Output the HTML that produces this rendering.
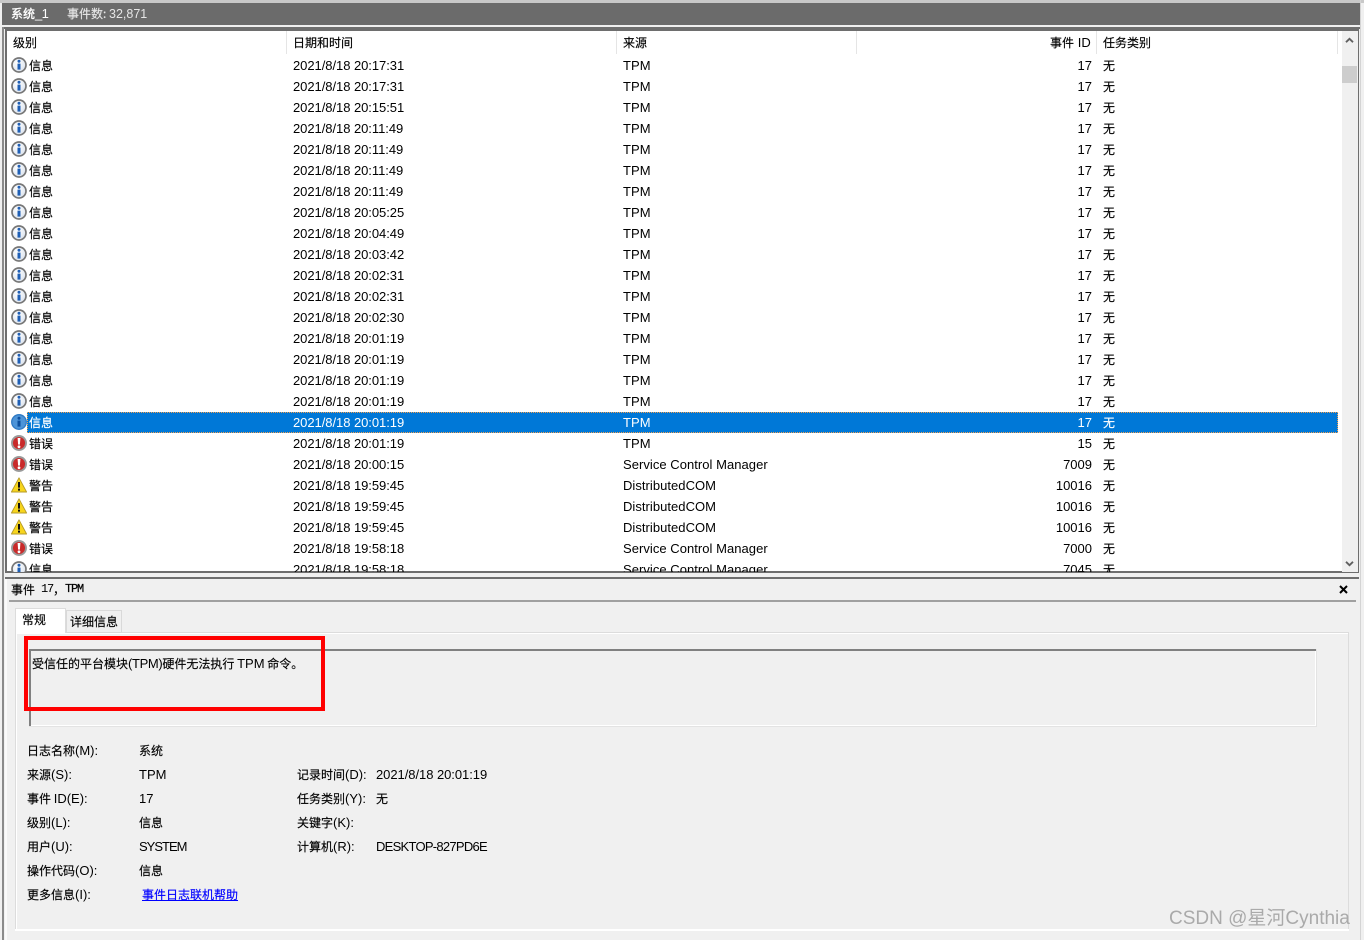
<!DOCTYPE html>
<html lang="zh"><head><meta charset="utf-8"><title>事件查看器</title>
<style>
html,body{margin:0;padding:0}
body{width:1364px;height:940px;position:relative;overflow:hidden;background:#f0f0f0;font:12px/21px "Noto Sans CJK SC","Liberation Sans",sans-serif;color:#000;-webkit-text-stroke:.15px currentColor}
div{position:absolute;box-sizing:border-box}
b{font:13px/21px "Liberation Sans","Noto Sans CJK SC",sans-serif;white-space:pre;-webkit-text-stroke:0;font-weight:400}
i{font-style:normal;white-space:pre}
.r{left:0;width:1335px;height:21px;position:relative;white-space:nowrap}
.r>*{position:absolute;top:0;line-height:21px}
.r svg{left:4px;top:2px;width:16px;height:16px}
.a{left:22px}.d{left:286px;letter-spacing:-.05px}.s{left:616px;letter-spacing:.04px}.n{right:250px;width:60px;text-align:right}.t{left:1096px}
.sel{background:#0078d7;color:#fff}
.h{top:31px;height:23px;line-height:23px;white-space:nowrap}
.v{top:31px;width:1px;height:23px;background:#e5e5e5}
.f{white-space:nowrap;height:24px;line-height:24px}
.f b{line-height:24px}
</style></head><body>
<svg width="0" height="0" style="position:absolute">
<defs>
<radialGradient id="gb" cx=".4" cy=".35" r=".8"><stop offset="0" stop-color="#fff"/><stop offset="1" stop-color="#d5deea"/></radialGradient>
<symbol id="ii" viewBox="0 0 16 16"><circle cx="8" cy="8" r="7" fill="url(#gb)" stroke="#767676" stroke-width="1.7"/><circle cx="8" cy="4.3" r="1.5" fill="#1f5fb5"/><path d="M6.5 6.6h3v6h-3z" fill="#1f5fb5"/></symbol>
<symbol id="is" viewBox="0 0 16 16"><circle cx="8" cy="8" r="7.3" fill="#4d94d8" stroke="#2f7ac4" stroke-width="1.3"/><circle cx="8" cy="4.3" r="1.5" fill="#0c4f9e"/><path d="M6.5 6.6h3v6h-3z" fill="#0c4f9e"/></symbol>
<symbol id="ie" viewBox="0 0 16 16"><circle cx="8" cy="8" r="7" fill="#c92a2a" stroke="#9a9a9a" stroke-width="1.9"/><path d="M6.6 3h2.8l-.5 6.6H7.1z" fill="#fff"/><circle cx="8" cy="11.8" r="1.4" fill="#fff"/></symbol>
<symbol id="iw" viewBox="0 0 16 16"><path d="M8 .8 15.6 15H.4z" fill="#f7d51d" stroke="#b59a2a" stroke-width=".9" stroke-linejoin="round"/><path d="M7 5h2v5.6H7zM7 11.6h2v2H7z" fill="#111"/></symbol>
</defs></svg>

<!-- outer frame -->
<div style="left:0;top:0;width:1364px;height:3px;background:#c8c8c8"></div>
<div style="left:2px;top:3px;width:1358px;height:22px;background:#6b6b6b"></div>
<div style="left:2px;top:27px;width:1358px;height:2px;background:#6f6f6f"></div>
<div style="left:2px;top:27px;width:2px;height:913px;background:#8a8a8a"></div>
<div style="left:1360px;top:0;width:1px;height:940px;background:#d4d4d4"></div>
<div style="left:11px;top:3px;height:22px;line-height:22px;color:#fff;white-space:nowrap"><i style="font-weight:500">系统</i><b style="line-height:22px;color:#fff;letter-spacing:-.6px">_1</b></div>
<div style="left:67px;top:3px;height:22px;line-height:22px;color:#e6e6e6;white-space:nowrap">事件数: <b style="line-height:22px;color:#e6e6e6;font-size:12.5px">32,871</b></div>

<!-- list -->
<div style="left:5px;top:29px;width:1354px;height:544px;background:#fff;border:2px solid #6e6e6e;border-width:2px 1px 2px 2px"></div>
<div class="h" style="left:13px">级别</div>
<div class="h" style="left:293px">日期和时间</div>
<div class="h" style="left:623px">来源</div>
<div class="h" style="left:1050px">事件 <b style="line-height:23px;margin-left:1px">ID</b></div>
<div class="h" style="left:1103px">任务类别</div>
<div class="v" style="left:286px"></div><div class="v" style="left:616px"></div><div class="v" style="left:856px"></div><div class="v" style="left:1096px"></div><div class="v" style="left:1337px"></div>

<div style="left:7px;top:55px;width:1335px;height:517px;overflow:hidden">
<div style="left:0;top:0;width:1335px">
<div class="r"><svg><use href="#ii"/></svg><i class="a">信息</i><b class="d">2021/8/18 20:17:31</b><b class="s">TPM</b><b class="n">17</b><i class="t">无</i></div>
<div class="r"><svg><use href="#ii"/></svg><i class="a">信息</i><b class="d">2021/8/18 20:17:31</b><b class="s">TPM</b><b class="n">17</b><i class="t">无</i></div>
<div class="r"><svg><use href="#ii"/></svg><i class="a">信息</i><b class="d">2021/8/18 20:15:51</b><b class="s">TPM</b><b class="n">17</b><i class="t">无</i></div>
<div class="r"><svg><use href="#ii"/></svg><i class="a">信息</i><b class="d">2021/8/18 20:11:49</b><b class="s">TPM</b><b class="n">17</b><i class="t">无</i></div>
<div class="r"><svg><use href="#ii"/></svg><i class="a">信息</i><b class="d">2021/8/18 20:11:49</b><b class="s">TPM</b><b class="n">17</b><i class="t">无</i></div>
<div class="r"><svg><use href="#ii"/></svg><i class="a">信息</i><b class="d">2021/8/18 20:11:49</b><b class="s">TPM</b><b class="n">17</b><i class="t">无</i></div>
<div class="r"><svg><use href="#ii"/></svg><i class="a">信息</i><b class="d">2021/8/18 20:11:49</b><b class="s">TPM</b><b class="n">17</b><i class="t">无</i></div>
<div class="r"><svg><use href="#ii"/></svg><i class="a">信息</i><b class="d">2021/8/18 20:05:25</b><b class="s">TPM</b><b class="n">17</b><i class="t">无</i></div>
<div class="r"><svg><use href="#ii"/></svg><i class="a">信息</i><b class="d">2021/8/18 20:04:49</b><b class="s">TPM</b><b class="n">17</b><i class="t">无</i></div>
<div class="r"><svg><use href="#ii"/></svg><i class="a">信息</i><b class="d">2021/8/18 20:03:42</b><b class="s">TPM</b><b class="n">17</b><i class="t">无</i></div>
<div class="r"><svg><use href="#ii"/></svg><i class="a">信息</i><b class="d">2021/8/18 20:02:31</b><b class="s">TPM</b><b class="n">17</b><i class="t">无</i></div>
<div class="r"><svg><use href="#ii"/></svg><i class="a">信息</i><b class="d">2021/8/18 20:02:31</b><b class="s">TPM</b><b class="n">17</b><i class="t">无</i></div>
<div class="r"><svg><use href="#ii"/></svg><i class="a">信息</i><b class="d">2021/8/18 20:02:30</b><b class="s">TPM</b><b class="n">17</b><i class="t">无</i></div>
<div class="r"><svg><use href="#ii"/></svg><i class="a">信息</i><b class="d">2021/8/18 20:01:19</b><b class="s">TPM</b><b class="n">17</b><i class="t">无</i></div>
<div class="r"><svg><use href="#ii"/></svg><i class="a">信息</i><b class="d">2021/8/18 20:01:19</b><b class="s">TPM</b><b class="n">17</b><i class="t">无</i></div>
<div class="r"><svg><use href="#ii"/></svg><i class="a">信息</i><b class="d">2021/8/18 20:01:19</b><b class="s">TPM</b><b class="n">17</b><i class="t">无</i></div>
<div class="r"><svg><use href="#ii"/></svg><i class="a">信息</i><b class="d">2021/8/18 20:01:19</b><b class="s">TPM</b><b class="n">17</b><i class="t">无</i></div>
<div class="r"><span class="sel" style="left:20px;top:0;width:1311px;height:21px;outline:1px dotted #f0a050;outline-offset:-1px"></span><svg><use href="#is"/></svg><i class="a" style="color:#fff">信息</i><b class="d" style="color:#fff">2021/8/18 20:01:19</b><b class="s" style="color:#fff">TPM</b><b class="n" style="color:#fff">17</b><i class="t" style="color:#fff">无</i></div>
<div class="r"><svg><use href="#ie"/></svg><i class="a">错误</i><b class="d">2021/8/18 20:01:19</b><b class="s">TPM</b><b class="n">15</b><i class="t">无</i></div>
<div class="r"><svg><use href="#ie"/></svg><i class="a">错误</i><b class="d">2021/8/18 20:00:15</b><b class="s">Service Control Manager</b><b class="n">7009</b><i class="t">无</i></div>
<div class="r"><svg><use href="#iw"/></svg><i class="a">警告</i><b class="d">2021/8/18 19:59:45</b><b class="s">DistributedCOM</b><b class="n">10016</b><i class="t">无</i></div>
<div class="r"><svg><use href="#iw"/></svg><i class="a">警告</i><b class="d">2021/8/18 19:59:45</b><b class="s">DistributedCOM</b><b class="n">10016</b><i class="t">无</i></div>
<div class="r"><svg><use href="#iw"/></svg><i class="a">警告</i><b class="d">2021/8/18 19:59:45</b><b class="s">DistributedCOM</b><b class="n">10016</b><i class="t">无</i></div>
<div class="r"><svg><use href="#ie"/></svg><i class="a">错误</i><b class="d">2021/8/18 19:58:18</b><b class="s">Service Control Manager</b><b class="n">7000</b><i class="t">无</i></div>
<div class="r"><svg><use href="#ii"/></svg><i class="a">信息</i><b class="d">2021/8/18 19:58:18</b><b class="s">Service Control Manager</b><b class="n">7045</b><i class="t">无</i></div>
</div></div>

<!-- scrollbar -->
<div style="left:1342px;top:31px;width:16px;height:541px;background:#f0f0f0"></div>
<div style="left:1342px;top:66px;width:15px;height:17px;background:#cdcdcd"></div>
<svg style="position:absolute;left:1345px;top:37px" width="9" height="7" viewBox="0 0 9 7"><path d="M1 5.2 4.5 1.8 8 5.2" fill="none" stroke="#606060" stroke-width="1.8"/></svg>
<svg style="position:absolute;left:1345px;top:560px" width="9" height="7" viewBox="0 0 9 7"><path d="M1 1.8 4.5 5.2 8 1.8" fill="none" stroke="#606060" stroke-width="1.8"/></svg>

<!-- lower panel -->
<div style="left:5px;top:577px;width:1354px;height:2px;background:#6e6e6e"></div>
<div style="left:5px;top:579px;width:2px;height:361px;background:#fafafa"></div>
<div style="left:11px;top:579px;height:21px;line-height:21px;white-space:nowrap">事件</div>
<div style="left:41px;top:579px;height:21px;line-height:21px;white-space:nowrap;-webkit-text-stroke:0;font:12px/21px 'Liberation Mono',monospace;letter-spacing:-1.2px">17</div>
<div style="left:53px;top:579px;height:21px;line-height:21px">，</div>
<div style="left:65px;top:579px;height:21px;line-height:21px;white-space:nowrap;-webkit-text-stroke:.2px #000;font:12px/21px 'Liberation Mono',monospace;letter-spacing:-1.2px">TPM</div>
<svg style="position:absolute;left:1339px;top:585px" width="9" height="9" viewBox="0 0 9 9"><path d="M1 1 8 8M8 1 1 8" stroke="#000" stroke-width="2"/></svg>
<div style="left:9px;top:600px;width:1347px;height:2px;background:#a0a0a0"></div>

<!-- tab pane -->
<div style="left:15px;top:632px;width:1334px;height:299px;border:1px solid #dcdcdc;border-width:1px 1px 0 1px;box-shadow:inset 1px 1px 0 #fff"></div>
<div style="left:15px;top:929px;width:1334px;height:2px;background:#fff"></div>
<div style="left:66px;top:610px;width:56px;height:23px;background:#f0f0f0;border:1px solid #d9d9d9;line-height:21px;padding-left:3px">详细信息</div>
<div style="left:15px;top:608px;width:51px;height:25px;background:#fff;border:1px solid #dcdcdc;border-bottom:0;line-height:22px;padding-left:6px">常规</div>

<!-- description box -->
<div style="left:29px;top:649px;width:1288px;height:78px;border:2px solid;border-color:#808080 #fff #fff #808080;outline:1px solid #e3e3e3;outline-offset:-1px;background:#f0f0f0"></div>
<div style="left:29px;top:649px;width:1287px;height:2px;background:#808080"></div>
<div style="left:29px;top:649px;width:2px;height:77px;background:#808080"></div>
<div style="left:32px;top:653px;white-space:nowrap">受信任的平台模块<b style="letter-spacing:-.35px">(TPM)</b>硬件无法执行 <b>TPM</b> 命令。</div>
<div style="left:24px;top:636px;width:301px;height:75px;border:4px solid #f00"></div>

<!-- fields -->
<div class="f" style="left:27px;top:739px">日志名称<b>(M):</b></div><div class="f" style="left:139px;top:739px">系统</div>
<div class="f" style="left:27px;top:763px">来源<b>(S):</b></div><div class="f" style="left:139px;top:763px"><b>TPM</b></div>
<div class="f" style="left:27px;top:787px">事件 <b>ID(E):</b></div><div class="f" style="left:139px;top:787px"><b>17</b></div>
<div class="f" style="left:27px;top:811px">级别<b>(L):</b></div><div class="f" style="left:139px;top:811px">信息</div>
<div class="f" style="left:27px;top:835px">用户<b>(U):</b></div><div class="f" style="left:139px;top:835px"><b style="letter-spacing:-1px">SYSTEM</b></div>
<div class="f" style="left:27px;top:859px">操作代码<b>(O):</b></div><div class="f" style="left:139px;top:859px">信息</div>
<div class="f" style="left:27px;top:883px">更多信息<b>(I):</b></div><div class="f" style="left:142px;top:883px;color:#00f;text-decoration:underline">事件日志联机帮助</div>
<div class="f" style="left:297px;top:763px">记录时间<b>(D):</b></div><div class="f" style="left:376px;top:763px"><b style="letter-spacing:-.05px">2021/8/18 20:01:19</b></div>
<div class="f" style="left:297px;top:787px">任务类别<b>(Y):</b></div><div class="f" style="left:376px;top:787px">无</div>
<div class="f" style="left:297px;top:811px">关键字<b>(K):</b></div>
<div class="f" style="left:297px;top:835px">计算机<b>(R):</b></div><div class="f" style="left:376px;top:835px"><b style="letter-spacing:-.73px">DESKTOP-827PD6E</b></div>

<!-- watermark -->
<div style="left:1169px;top:905px;height:28px;line-height:28px;white-space:nowrap;color:#aaa;font-size:19px;font-family:'Liberation Sans','Noto Sans CJK SC',sans-serif;-webkit-text-stroke:0">CSDN @星河Cynthia</div>
</body></html>
